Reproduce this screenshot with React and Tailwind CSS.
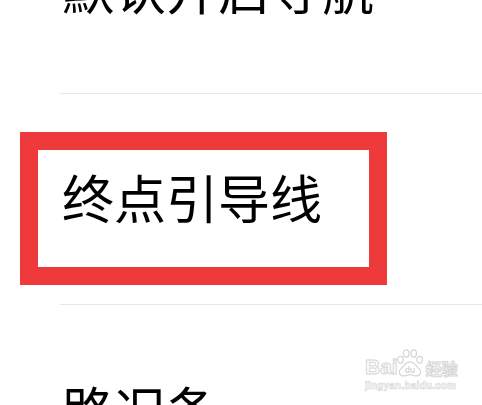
const cjk = "font-['Noto_Sans_CJK_SC','Noto_Sans',sans-serif]";

const Divider = () => <div className="ml-[60px] h-px bg-[#e6e6e6]" />;

const Watermark = () => (
  <div className="absolute left-[365px] top-[348px] flex flex-col items-start select-none">
    <div className="flex items-end">
      <span className="font-['Liberation_Sans',sans-serif] font-bold text-[21px] leading-none text-white [-webkit-text-stroke:1px_#d6d6d6]">
        Bai
      </span>
      <svg width="32" height="30" viewBox="0 0 30 28" className="-ml-[4px] -mb-[1px]">
        <g fill="none" stroke="#d6d6d6" strokeWidth="1.2">
          <ellipse cx="6" cy="11" rx="2.6" ry="3.2" />
          <ellipse cx="11.5" cy="5" rx="2.6" ry="3.4" />
          <ellipse cx="18.5" cy="5" rx="2.6" ry="3.4" />
          <ellipse cx="24" cy="11" rx="2.6" ry="3.2" />
          <path d="M15 13c-4 0-6 4-9 7-2 2-1 6 3 6 2 0 4-1 6-1s4 1 6 1c4 0 5-4 3-6-3-3-5-7-9-7z" />
        </g>
        <text x="15" y="23.5" textAnchor="middle" fontSize="8" fontWeight="700" fontFamily="Liberation Sans, sans-serif" fill="#d6d6d6">
          du
        </text>
      </svg>
      <span className={`${cjk} font-bold text-[16px] leading-none text-white [-webkit-text-stroke:1px_#d6d6d6] mb-[1px]`}>
        经验
      </span>
    </div>
    <span className="mt-[4px] font-['Liberation_Sans',sans-serif] font-bold text-[10px] leading-none tracking-[0.2px] text-white [-webkit-text-stroke:0.6px_#d6d6d6]">
      jingyan.baidu.com
    </span>
  </div>
);

export default function App() {
  return (
    <div className={`relative w-[482px] h-[405px] overflow-hidden bg-white text-black ${cjk}`}>
      <div className="flex flex-col">
        <div className="flex flex-col pl-[62px] pb-[79px]">
          <p className="-mt-[38px] text-[52px] leading-none">默认开启导航</p>
        </div>
        <Divider />
        <div className="flex flex-col pl-[20px] pt-[38px] pb-[19px]">
          <div className="w-[367px] h-[153px] border-[18px] border-[#ee3a3a] pl-[24px] pt-[21px]">
            <p className="text-[52px] leading-none">终点引导线</p>
          </div>
        </div>
        <Divider />
        <div className="flex flex-col pl-[62px] pt-[78px]">
          <p className="text-[52px] leading-none">路况条</p>
        </div>
      </div>
      <Watermark />
    </div>
  );
}
